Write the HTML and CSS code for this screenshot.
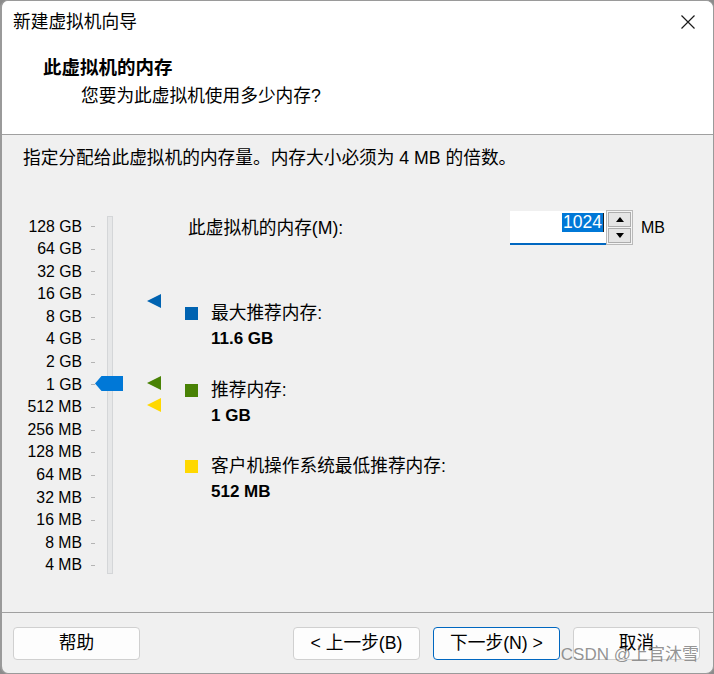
FILE: index.html
```html
<!DOCTYPE html>
<html lang="zh-CN">
<head>
<meta charset="utf-8">
<title>新建虚拟机向导</title>
<link rel="stylesheet" href="styles.css">
</head>
<body>
<div class="window">
  <div class="titlebar">
    <span class="title">新建虚拟机向导</span>
    <svg class="close" width="14" height="14" viewBox="0 0 14 14"><path d="M0.5 0.5 L13.5 13.5 M13.5 0.5 L0.5 13.5" stroke="#1a1a1a" stroke-width="1.2" fill="none"/></svg>
  </div>
  <div class="header">
    <h1 class="h-title">此虚拟机的内存</h1>
    <p class="h-sub">您要为此虚拟机使用多少内存?</p>
  </div>
  <div class="content">
    <p class="intro">指定分配给此虚拟机的内存量。内存大小必须为 4 MB 的倍数。</p>
    <div class="main">
      <div class="scale">
        <div class="rows">
          <div class="row"><span class="lbl">128 GB</span><i class="tick"></i></div>
          <div class="row"><span class="lbl">64 GB</span><i class="tick"></i></div>
          <div class="row"><span class="lbl">32 GB</span><i class="tick"></i></div>
          <div class="row"><span class="lbl">16 GB</span><i class="tick"></i></div>
          <div class="row"><span class="lbl">8 GB</span><i class="tick"></i></div>
          <div class="row"><span class="lbl">4 GB</span><i class="tick"></i></div>
          <div class="row"><span class="lbl">2 GB</span><i class="tick"></i></div>
          <div class="row"><span class="lbl">1 GB</span><i class="tick"></i></div>
          <div class="row"><span class="lbl">512 MB</span><i class="tick"></i></div>
          <div class="row"><span class="lbl">256 MB</span><i class="tick"></i></div>
          <div class="row"><span class="lbl">128 MB</span><i class="tick"></i></div>
          <div class="row"><span class="lbl">64 MB</span><i class="tick"></i></div>
          <div class="row"><span class="lbl">32 MB</span><i class="tick"></i></div>
          <div class="row"><span class="lbl">16 MB</span><i class="tick"></i></div>
          <div class="row"><span class="lbl">8 MB</span><i class="tick"></i></div>
          <div class="row"><span class="lbl">4 MB</span><i class="tick"></i></div>
        </div>
        <div class="track"></div>
        <svg class="thumb" width="28" height="15" viewBox="0 0 28 15"><polygon points="0,7.5 6.5,0 28,0 28,15 6.5,15" fill="#0078d7"/></svg>
        <svg class="marker m-max" width="14" height="14" viewBox="0 0 14 14"><polygon points="0,7 14,0 14,14" fill="#0063b1"/></svg>
        <svg class="marker m-rec" width="14" height="14" viewBox="0 0 14 14"><polygon points="0,7 14,0 14,14" fill="#498205"/></svg>
        <svg class="marker m-min" width="14" height="14" viewBox="0 0 14 14"><polygon points="0,7 14,0 14,14" fill="#ffd800"/></svg>
      </div>
      <div class="panel">
        <div class="mem-row">
          <span class="mem-label">此虚拟机的内存(M):</span>
          <div class="input"><span class="sel">1024</span><i class="caret"></i></div>
          <div class="spin">
            <div class="spin-btn"><svg width="8" height="5" viewBox="0 0 8 5"><polygon points="0,5 4,0 8,5" fill="#000"/></svg></div>
            <div class="spin-btn"><svg width="8" height="5" viewBox="0 0 8 5"><polygon points="0,0 8,0 4,5" fill="#000"/></svg></div>
          </div>
          <span class="unit">MB</span>
        </div>
        <div class="legend">
          <div class="item"><span class="sq sq-blue"></span><div class="txt"><div class="t-lbl">最大推荐内存:</div><div class="t-val">11.6 GB</div></div></div>
          <div class="item"><span class="sq sq-green"></span><div class="txt"><div class="t-lbl">推荐内存:</div><div class="t-val">1 GB</div></div></div>
          <div class="item"><span class="sq sq-yellow"></span><div class="txt"><div class="t-lbl">客户机操作系统最低推荐内存:</div><div class="t-val">512 MB</div></div></div>
        </div>
      </div>
    </div>
  </div>
  <div class="footer">
    <button class="btn">帮助</button>
    <div class="spacer"></div>
    <button class="btn">&lt; 上一步(B)</button>
    <button class="btn btn-primary">下一步(N) &gt;</button>
    <button class="btn">取消</button>
  </div>
  <div class="watermark">CSDN @上官沐雪</div>
</div>
</body>
</html>
```
FILE: styles.css
```css
* { box-sizing: border-box; }
html, body { margin: 0; padding: 0; }
body {
  width: 714px;
  height: 674px;
  background: #8c8c8c;
  font-family: "Liberation Sans", "Noto Sans CJK SC", sans-serif;
  color: #000;
  overflow: hidden;
}
.window {
  position: relative;
  width: 714px;
  height: 674px;
  border: 1px solid #9a9a9a;
  border-left-width: 2px;
  border-radius: 8px;
  background: #f0f0f0;
  display: flex;
  flex-direction: column;
  overflow: hidden;
}
.titlebar {
  height: 44px;
  background: #fff;
  display: flex;
  align-items: center;
  padding: 0 18px 0 11px;
}
.title {
  font-size: 17.7px;
  line-height: 44px;
  flex: 1;
  margin-top: -2px;
}
.close { display: block; margin-top: -2px; }
.header {
  height: 90px;
  background: #fff;
  border-bottom: 1px solid #a0a0a0;
  padding: 11px 0 0 41px;
}
.h-title {
  margin: 0;
  font-size: 18.5px;
  font-weight: 700;
  line-height: 24px;
}
.h-sub {
  margin: 4px 0 0 38px;
  font-size: 17.7px;
  line-height: 24px;
}
.content {
  flex: 1;
  padding: 11px 0 0 21px;
}
.intro {
  margin: 0;
  font-size: 17.7px;
  line-height: 24px;
}
.main {
  display: grid;
  grid-template-columns: 162px 1fr;
  margin-top: 40px;
  align-items: start;
}
.scale {
  position: relative;
  margin-top: 4px;
  display: flex;
  height: 362px;
}
.rows { display: flex; flex-direction: column; padding-top: 1.5px; }
.row {
  height: 22.6px;
  display: flex;
  align-items: center;
}
.lbl {
  width: 59px;
  text-align: right;
  font-size: 15.8px;
  line-height: 22.6px;
  white-space: nowrap;
}
.tick {
  display: block;
  width: 4px;
  height: 1px;
  margin-left: 9px;
  background: #b4b4b4;
}
.track {
  width: 6px;
  height: 358px;
  margin: 2px 0 0 12px;
  background: #e6e7e8;
  border: 1px solid #d4d6d8;
}
.thumb { position: absolute; left: 72px; top: 162px; display: block; }
.marker { position: absolute; left: 124px; display: block; }
.m-max { top: 80px; }
.m-rec { top: 162px; }
.m-min { top: 184px; }
.panel { display: flex; flex-direction: column; }
.mem-row {
  display: flex;
  align-items: center;
  height: 35px;
  padding-left: 3px;
}
.mem-label {
  width: 322px;
  font-size: 17.7px;
  line-height: 24px;
}
.input {
  width: 96px;
  height: 34px;
  margin-top: 1px;
  background: #fff;
  border-bottom: 2px solid #0067c0;
  display: flex;
  justify-content: flex-end;
  align-items: flex-start;
  padding: 2px 2px 0 0;
}
.sel {
  background: #0078d7;
  color: #fff;
  font-size: 17.5px;
  line-height: 19px;
  padding: 0 1px;
}
.caret { display: block; width: 1px; height: 19px; background: #202020; }
.spin {
  width: 27px;
  height: 35px;
  border: 1px solid #b9b9b9;
  background: #f4f4f4;
  padding: 1px;
  display: flex;
  flex-direction: column;
  gap: 1px;
}
.spin-btn {
  flex: 1;
  border: 1px solid #adadad;
  background: #e5e5e5;
  display: flex;
  align-items: center;
  justify-content: center;
}
.spin-btn svg { display: block; }
.unit {
  margin-left: 8px;
  font-size: 16px;
  line-height: 24px;
}
.legend {
  display: flex;
  flex-direction: column;
  gap: 26.5px;
  margin-top: 56px;
}
.item { display: flex; align-items: flex-start; }
.sq { width: 13px; height: 13px; margin-top: 6px; flex: none; }
.sq-blue { background: #0063b1; }
.sq-green { background: #498205; }
.sq-yellow { background: #ffd800; }
.txt { margin-left: 13px; }
.t-lbl { font-size: 17.7px; line-height: 25px; }
.t-val { font-size: 17px; font-weight: 700; line-height: 25px; }
.footer {
  height: 61px;
  border-top: 1px solid #a0a0a0;
  display: flex;
  align-items: flex-start;
  gap: 13px;
  padding: 14px 13px 0 11px;
}
.spacer { flex: 1; }
.btn {
  width: 127px;
  height: 33px;
  border: 1px solid #d0d0d0;
  border-radius: 4px;
  background: #fdfdfd;
  font-family: "Liberation Sans", "Noto Sans CJK SC", sans-serif;
  font-size: 17.7px;
  color: #000;
  padding: 0;
  line-height: 31px;
}
.btn-primary { border-color: #0067c0; }
.watermark {
  position: absolute;
  right: 14px;
  bottom: 7px;
  font-size: 17px;
  line-height: 22px;
  color: rgba(120, 120, 120, 0.8);
  white-space: nowrap;
}
```
